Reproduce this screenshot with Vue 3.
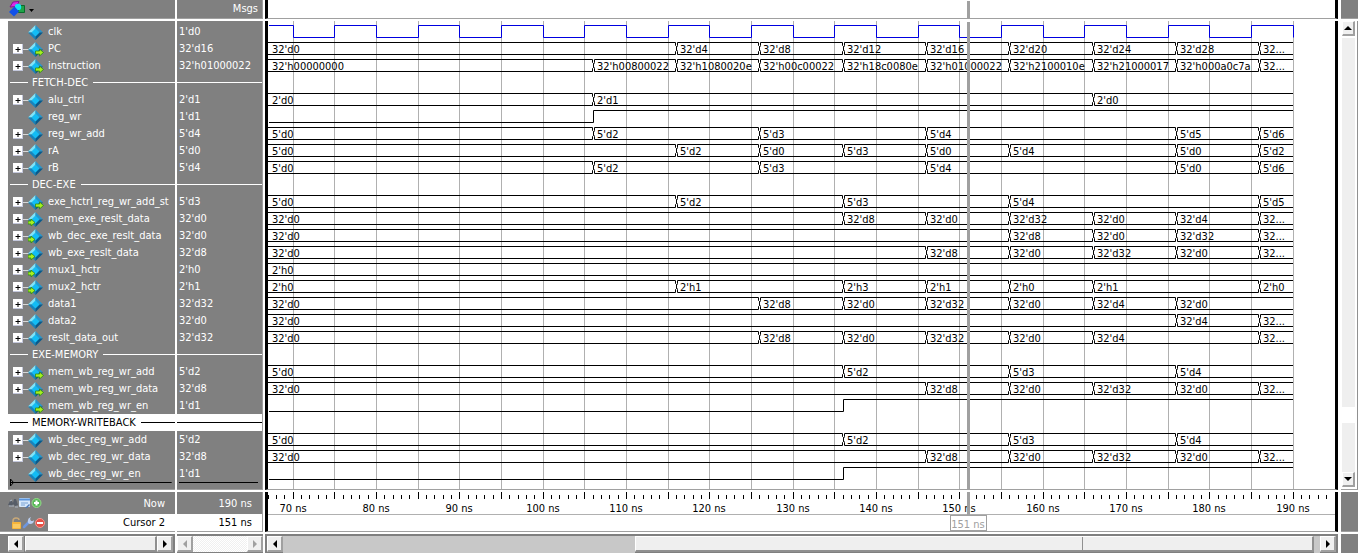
<script setup>
const ROW = 17
const TOP = 2
const END = 190

const x = (t) => Math.floor(25 + ((t - 70) * 25) / 3)

const wide = (list) => list.map(([t, v]) => [t, v === '...' ? '32...' : `32'd${v}`])
const reg = (list) => list.map(([t, v]) => [t, `5'd${v}`])
const hex = (list) => list.map(([t, v]) => [t, `2'h${v}`])

const memData = wide([[0, 0], [146, 8], [156, 0], [166, 32], [176, 0], [186, '...']])
const memAdd = reg([[0, 0], [136, 2], [156, 3], [176, 4]])

const rows = [
  { name: 'clk', value: "1'd0", clock: true },
  { name: 'PC', value: "32'd16", port: 'out', bus: wide([[0, 0], [116, 4], [126, 8], [136, 12], [146, 16], [156, 20], [166, 24], [176, 28], [186, '...']]) },
  {
    name: 'instruction', value: "32'h01000022", port: 'out',
    bus: [[0, "32'h00000000"], [106, "32'h00800022"], [116, "32'h1080020e"], [126, "32'h00c00022"], [136, "32'h18c0080e"], [146, "32'h01000022"], [156, "32'h2100010e"], [166, "32'h21000017"], [176, "32'h000a0c7a"], [186, '32...']]
  },
  { divider: 'FETCH-DEC' },
  { name: 'alu_ctrl', value: "2'd1", bus: [[0, "2'd0"], [106, "2'd1"], [166, "2'd0"]] },
  { name: 'reg_wr', value: "1'd1", rise: 106 },
  { name: 'reg_wr_add', value: "5'd4", bus: reg([[0, 0], [106, 2], [126, 3], [146, 4], [176, 5], [186, 6]]) },
  { name: 'rA', value: "5'd0", bus: reg([[0, 0], [116, 2], [126, 0], [136, 3], [146, 0], [156, 4], [176, 0], [186, 2]]) },
  { name: 'rB', value: "5'd4", bus: reg([[0, 0], [106, 2], [126, 3], [146, 4], [176, 0], [186, 6]]) },
  { divider: 'DEC-EXE' },
  { name: 'exe_hctrl_reg_wr_add_st', value: "5'd3", port: 'out', bus: reg([[0, 0], [116, 2], [136, 3], [156, 4], [186, 5]]) },
  { name: 'mem_exe_reslt_data', value: "32'd0", port: 'in', bus: wide([[0, 0], [136, 8], [146, 0], [156, 32], [166, 0], [176, 4], [186, '...']]) },
  { name: 'wb_dec_exe_reslt_data', value: "32'd0", port: 'in', bus: wide([[0, 0], [156, 8], [166, 0], [176, 32], [186, '...']]) },
  { name: 'wb_exe_reslt_data', value: "32'd8", port: 'in', bus: memData },
  { name: 'mux1_hctr', value: "2'h0", port: 'in', bus: hex([[0, 0]]) },
  { name: 'mux2_hctr', value: "2'h1", port: 'in', bus: hex([[0, 0], [116, 1], [136, 3], [146, 1], [156, 0], [166, 1], [186, 0]]) },
  { name: 'data1', value: "32'd32", bus: wide([[0, 0], [126, 8], [136, 0], [146, 32], [156, 0], [166, 4], [176, 0]]) },
  { name: 'data2', value: "32'd0", bus: wide([[0, 0], [176, 4], [186, '...']]) },
  { name: 'reslt_data_out', value: "32'd32", bus: wide([[0, 0], [126, 8], [136, 0], [146, 32], [156, 0], [166, 4], [186, '...']]) },
  { divider: 'EXE-MEMORY' },
  { name: 'mem_wb_reg_wr_add', value: "5'd2", port: 'out', bus: memAdd },
  { name: 'mem_wb_reg_wr_data', value: "32'd8", port: 'out', bus: memData },
  { name: 'mem_wb_reg_wr_en', value: "1'd1", port: 'out', rise: 136 },
  { divider: 'MEMORY-WRITEBACK', selected: true },
  { name: 'wb_dec_reg_wr_add', value: "5'd2", bus: memAdd },
  { name: 'wb_dec_reg_wr_data', value: "32'd8", bus: memData },
  { name: 'wb_dec_reg_wr_en', value: "1'd1", rise: 136 }
]

const grid = Array.from({ length: 25 }, (_, i) => x(70 + i * 5))
const ticks = Array.from({ length: 128 }, (_, i) => ({ x: x(67 + i), major: (67 + i) % 5 === 0 }))
const marks = Array.from({ length: 13 }, (_, i) => 70 + i * 10)

function clockPath() {
  let d = 'M1 4.5'
  for (let i = 0; i < 25; i++) {
    const px = x(70 + i * 5) + 0.5
    d += `H${px}V${i % 2 === 0 ? 16.5 : 4.5}`
  }
  return d
}

function busPath(row, i) {
  const hi = TOP + i * ROW + 2.5
  const lo = hi + 12
  let d = ''
  let from = 0
  row.bus.slice(1).forEach(([t]) => {
    const p = x(t)
    d += `M${from} ${hi}H${p - 0.5}V${hi + 3}L${p + 0.5} ${hi + 4}V${lo - 4}L${p - 0.5} ${lo - 3}V${lo}H${from}`
    from = p + 1.5
    d += `M${from} ${hi}V${hi + 3}L${p + 0.5} ${hi + 5}V${lo - 5}L${from} ${lo - 3}V${lo}`
  })
  d += `M${from} ${hi}H${x(END)}M${from} ${lo}H${x(END)}`
  return d
}

function risePath(row, i) {
  const hi = TOP + i * ROW + 2.5
  return `M1 ${hi + 12}H${x(row.rise) + 0.5}V${hi}H${x(END)}`
}

const labelX = (t) => (t ? x(t) + 4 : 4)
const labelY = (i) => TOP + i * ROW + 13
</script>

<template>
  <main class="viewer">
    <header class="head names-head">
      <button class="menu" aria-label="Object menu">
        <svg width="28" height="18" viewBox="0 0 28 18">
          <path d="M10.500 5.500h6v7h-6z" fill="#1fa548" stroke="#0a6b2c" />
          <path d="M5 2l6-.5-2.500 5L2 7z" fill="#d82ce6" stroke="#8b118f" />
          <circle cx="10" cy="7" r="3.2" fill="#10e8f4" />
          <path d="M6.500 6.500L11 11.500 6 16.500 1 12z" fill="#1150e8" />
          <path d="M21 9h5l-2.500 3z" fill="#000" />
        </svg>
      </button>
    </header>
    <div class="head values-head">Msgs</div>
    <div class="head wave">
      <svg class="plot" height="18"><rect :x="x(151) - 1" y="1" width="3" height="17" fill="#a0a0a0" /></svg>
    </div>
    <div class="head corner"></div>

    <section class="body names" aria-label="Signals">
      <div v-for="(r, i) in rows" :key="i" class="row" :class="{ selected: r.selected }">
        <template v-if="r.divider">
          <span class="lead"></span><span class="title">{{ r.divider }}</span><span class="rule"></span>
        </template>
        <template v-else>
          <button v-if="r.bus" class="expand" :aria-label="'Expand ' + r.name">
            <svg width="16" height="10" viewBox="0 0 16 10">
              <rect width="10" height="10" fill="#fff" />
              <path d="M0 9.5h10M9.5 0v10" stroke="#c4c8dc" />
              <path d="M2.500 5.500h5M5 3v5" stroke="#000" />
              <path d="M10 5.500h6" stroke="#d8d8d8" />
            </svg>
          </button>
          <span v-else class="blank"></span>
          <svg class="gem" width="16" height="16" viewBox="0 0 16 16">
            <path d="M7.5 1L0 8.500h4l3.500-3.500z" fill="#7fe4fa" />
            <path d="M7.500 1l7.500 7.500h-4L7.500 5z" fill="#2596cc" />
            <path d="M0 8.500l7.500 7.500v-4L4 8.500z" fill="#1684bd" />
            <path d="M15 8.500l-7.500 7.500v-4l3.500-3.500z" fill="#075a8c" />
            <path d="M7.500 4.500l4 4-4 4-4-4z" fill="#12bdf5" />
            <path v-if="r.port === 'out'" d="M7.500 10h4v-2l4 3.500-4 3.500v-2h-4z" fill="#a8f020" stroke="#2b8a12" stroke-width=".8" />
            <path v-if="r.port === 'in'" d="M0 10h3v-2l4 3.500-4 3.500v-2H0z" fill="#a8f020" stroke="#2b8a12" stroke-width=".8" />
          </svg>
          <span class="name">{{ r.name }}</span>
        </template>
      </div>
      <svg class="insert" height="6">
        <path d="M2.500 -3v7l3-3.500z" fill="none" stroke="#000" />
        <line x1="3" y1="0.500" x2="98%" y2="0.500" stroke="#000" />
      </svg>
    </section>

    <section class="body values" aria-label="Values">
      <div v-for="(r, i) in rows" :key="i" class="row" :class="{ selected: r.selected }">
        <span v-if="r.divider" class="rule full"></span>
        <span v-else>{{ r.value }}</span>
      </div>
      <div class="end-line"></div>
    </section>

    <section class="body wave" aria-label="Waveform">
      <svg class="plot" height="468">
        <g fill="#b0b0b0">
          <rect v-for="g in grid" :key="g" :x="g" y="0" width="1" height="468" />
        </g>
        <template v-for="(r, i) in rows" :key="i">
          <path v-if="r.clock" :d="clockPath()" class="trace clock" />
          <path v-if="r.rise" :d="risePath(r, i)" class="trace" />
          <template v-if="r.bus">
            <path :d="busPath(r, i)" class="trace" />
            <text v-for="b in r.bus" :key="b[0]" :x="labelX(b[0])" :y="labelY(i)">{{ b[1] }}</text>
          </template>
        </template>
        <rect :x="x(151) - 1" y="1" width="3" height="467" fill="#a0a0a0" />
      </svg>
    </section>

    <div class="body vscroll">
      <button class="arrow" aria-label="Scroll up"><svg width="8" height="4"><path d="M0 4h8L4 0z" /></svg></button>
      <div class="vthumb"></div>
      <div class="vtrack"></div>
      <div class="vrest"></div>
      <button class="arrow" aria-label="Scroll down"><svg width="8" height="4"><path d="M0 0h8L4 4z" /></svg></button>
    </div>

    <div class="foot names-foot">
      <div class="now">
        <div class="tools">
          <button aria-label="Find cursor">
            <svg width="11" height="12" viewBox="0 0 11 12"><path d="M0 8l2-4h2l1 2 1-4h2l2 6-3 1-2-2-1 2z" fill="#565d68" /><path d="M1 9h5M2 4l2-1M7 10h3" stroke="#aab4c2" /></svg>
          </button>
          <button aria-label="Edit grid">
            <svg width="12" height="12" viewBox="0 0 12 12"><rect x="0" y="1" width="11" height="9" rx="1" fill="#d5e7fa" /><path d="M0 2.500h11" stroke="#5a94dc" stroke-width="2" /><path d="M2 6h7M2 8h4" stroke="#7aa3d4" /><path d="M6 11l4-4 1 1-3 3z" fill="#4a78b8" /></svg>
          </button>
          <button aria-label="Add cursor">
            <svg width="12" height="12" viewBox="0 0 12 12"><circle cx="5.500" cy="6" r="4.500" fill="#58b858" stroke="#96dc8c" /><path d="M3 6h5M5.500 3.500v5" stroke="#fff" stroke-width="2" /></svg>
          </button>
        </div>
        <span class="foot-text">Now</span>
      </div>
      <div class="cursor">
        <div class="tools">
          <button aria-label="Lock cursor">
            <svg width="14" height="12" viewBox="0 0 14 12"><path d="M5 6V4q0-3 3-3t3 2" fill="none" stroke="#c8a878" stroke-width="1.500" /><rect x="4" y="5" width="9" height="7" rx="1" fill="#f5b43c" /><path d="M5 8h7M5 10h7" stroke="#ffe08a" /></svg>
          </button>
          <button aria-label="Cursor settings">
            <svg width="12" height="12" viewBox="0 0 12 12"><path d="M2 10l5-5" stroke="#6c96e0" stroke-width="2.500" stroke-linecap="round" /><path d="M9 0L8 2l1 2 2 0 1-1q0 4-4 4Q5 6 6 3q0-2 3-3z" fill="#b8cdf0" /></svg>
          </button>
          <button aria-label="Delete cursor">
            <svg width="12" height="12" viewBox="0 0 12 12"><circle cx="6" cy="6" r="4.500" fill="#e65046" stroke="#f49a92" /><path d="M3 6h6" stroke="#fff" stroke-width="2" /></svg>
          </button>
        </div>
        <span class="foot-text">Cursor 2</span>
      </div>
    </div>
    <div class="foot values-foot">
      <div class="now"><span class="foot-text">190 ns</span></div>
      <div class="cursor"><span class="foot-text">151 ns</span></div>
    </div>
    <div class="foot wave">
      <svg class="plot" height="39">
        <rect v-for="t in ticks" :key="t.x" :x="t.x" :y="t.major ? 0 : 3" width="1" :height="t.major ? 7 : 4" />
        <text v-for="m in marks" :key="m" :x="x(m)" y="20" text-anchor="middle">{{ m }} ns</text>
        <rect x="0" y="22" width="100%" height="1" fill="#b0b0b0" />
        <rect :x="x(151) - 1" y="0" width="3" height="23" fill="#a0a0a0" />
        <rect :x="x(151) - 17.5" y="23.5" width="36" height="15" fill="#fff" stroke="#a0a0a0" />
        <text :x="x(151)" y="36" text-anchor="middle" class="faded">151 ns</text>
      </svg>
    </div>
    <div class="foot corner"></div>

    <div class="hscroll names-scroll">
      <button class="arrow" aria-label="Scroll names left"><svg width="4" height="8"><path d="M4 0v8L0 4z" /></svg></button>
      <div class="thumb"></div>
      <button class="arrow" aria-label="Scroll names right"><svg width="4" height="8"><path d="M0 0v8l4-4z" /></svg></button>
    </div>
    <div class="hscroll values-scroll">
      <button class="arrow" disabled aria-label="Scroll values left"><svg width="4" height="8"><path d="M4 0v8L0 4z" /></svg></button>
      <div class="hatch"></div>
      <button class="arrow" disabled aria-label="Scroll values right"><svg width="4" height="8"><path d="M0 0v8l4-4z" /></svg></button>
    </div>
    <div class="hscroll wave-scroll">
      <button class="arrow" aria-label="Scroll wave left"><svg width="4" height="8"><path d="M4 0v8L0 4z" /></svg></button>
      <div class="before"></div>
      <div class="thumb span"><span class="notch"></span></div>
      <div class="after"></div>
      <button class="arrow" aria-label="Scroll wave right"><svg width="4" height="8"><path d="M0 0v8l4-4z" /></svg></button>
    </div>
    <div class="corner"></div>
  </main>
</template>

<style>
body {
  background: #fff;
}
</style>

<style scoped>
.viewer {
  display: grid;
  grid-template-columns: 175px 86px minmax(0, 1fr) 18px;
  gap: 2px;
  font-family: "DejaVu Sans Condensed", "DejaVu Sans", sans-serif;
  font-size: 11px;
  line-height: 17px;
  color: #fff;
  cursor: default;
}
button {
  padding: 0;
  border: 0;
  background: none;
  font: inherit;
}
svg {
  display: block;
}
.head,
.body,
.foot {
  border-bottom: 1px solid #a0a0a0;
}
.head {
  height: 18px;
  background: #808080;
}
.names-head {
  padding-left: 8px;
}
.values-head,
.values,
.values-foot {
  border-right: 1px solid #a0a0a0;
}
.values-head {
  padding-right: 4px;
  line-height: 18px;
  text-align: right;
}
.wave {
  background: #fff;
  border-left: 3px solid #000;
  border-right: 3px solid #000;
}
.plot {
  width: 100%;
  overflow: hidden;
}
.plot text {
  fill: #000;
}
.plot .faded {
  fill: #a0a0a0;
}
.trace {
  fill: none;
  stroke: #000;
}
.clock {
  stroke: #0000e0;
}
.corner {
  background: #808080;
  margin-left: 1px;
}
.names {
  margin-left: 8px;
  padding-top: 2px;
  background: #808080;
}
.values {
  padding-top: 2px;
  background: #808080;
}
.row {
  display: flex;
  align-items: center;
  height: 17px;
  padding-left: 2px;
  white-space: nowrap;
}
.row.selected {
  background: #fff;
  color: #000;
}
.values .row:has(.full) {
  padding: 0;
}
.expand {
  width: 15px;
  margin-left: 3px;
  padding-top: 1px;
}
.blank {
  width: 18px;
}
.gem {
  flex: none;
  width: 16px;
}
.name {
  margin-left: 4px;
}
.lead {
  width: 18px;
  height: 1px;
  background: currentColor;
}
.title {
  padding: 0 5px 0 4px;
}
.rule {
  flex: 1;
  height: 1px;
  background: currentColor;
}
.insert {
  width: 100%;
  overflow: visible;
}
.end-line {
  height: 1px;
  margin: 0 4px 0 2px;
  background: #000;
}
.vscroll {
  display: flex;
  flex-direction: column;
  margin-left: 1px;
  padding: 0 2px 2px 1px;
  background: #fff;
  border-right: 1px solid #909090;
}
.vthumb {
  flex: 369;
  margin-top: 2px;
  background: #efefef;
}
.vtrack {
  flex: 16;
  background: #fff;
}
.vrest {
  flex: 49;
  background: #efefef;
}
.arrow {
  display: flex;
  flex: none;
  align-items: center;
  justify-content: center;
  width: 15px;
  height: 16px;
  background: #f0f0f0;
  border: 1px solid #fff;
  border-right: 2px solid #a0a0a0;
  border-bottom: 2px solid #a0a0a0;
}
.arrow:disabled svg {
  fill: #a0a0a0;
}
.vscroll .arrow {
  width: 13px;
  height: 15px;
}
.names-foot,
.values-foot {
  background: #808080;
}
.now,
.cursor {
  display: flex;
  align-items: center;
}
.now {
  height: 22px;
}
.cursor {
  height: 17px;
  color: #000;
  background: #fff;
}
.tools {
  display: flex;
  align-items: center;
  width: 40px;
  height: 17px;
  padding-left: 8px;
  background: #808080;
}
.tools button {
  flex: none;
}
.foot-text {
  flex: 1;
  padding-right: 10px;
  text-align: right;
}
.hscroll {
  display: flex;
  box-sizing: border-box;
  height: 19px;
  padding-top: 1px;
  background: #808080;
  border-top: 1px solid #808080;
}
.hscroll .arrow {
  width: 16px;
}
.names-scroll {
  padding-left: 8px;
  padding-right: 2px;
}
.names-scroll .thumb {
  margin-left: 1px;
}
.thumb {
  flex: 1;
  height: 16px;
  box-sizing: border-box;
  background: #efefef;
  border: 1px solid #fff;
  border-right: 2px solid #909090;
  border-bottom: 2px solid #909090;
}
.hatch {
  flex: 1;
  height: 16px;
  background: repeating-conic-gradient(#fff 0 25%, #f0f0f0 0 50%) 0 0 / 2px 2px;
}
.wave-scroll {
  padding-left: 2px;
  padding-right: 2px;
}
.before {
  flex: 354;
  background: #c8c8c8;
}
.span {
  display: flex;
  flex: 680;
}
.notch {
  width: 66%;
  border-right: 1px solid #909090;
}
.after {
  flex: 6;
  background: #c8c8c8;
}
</style>
